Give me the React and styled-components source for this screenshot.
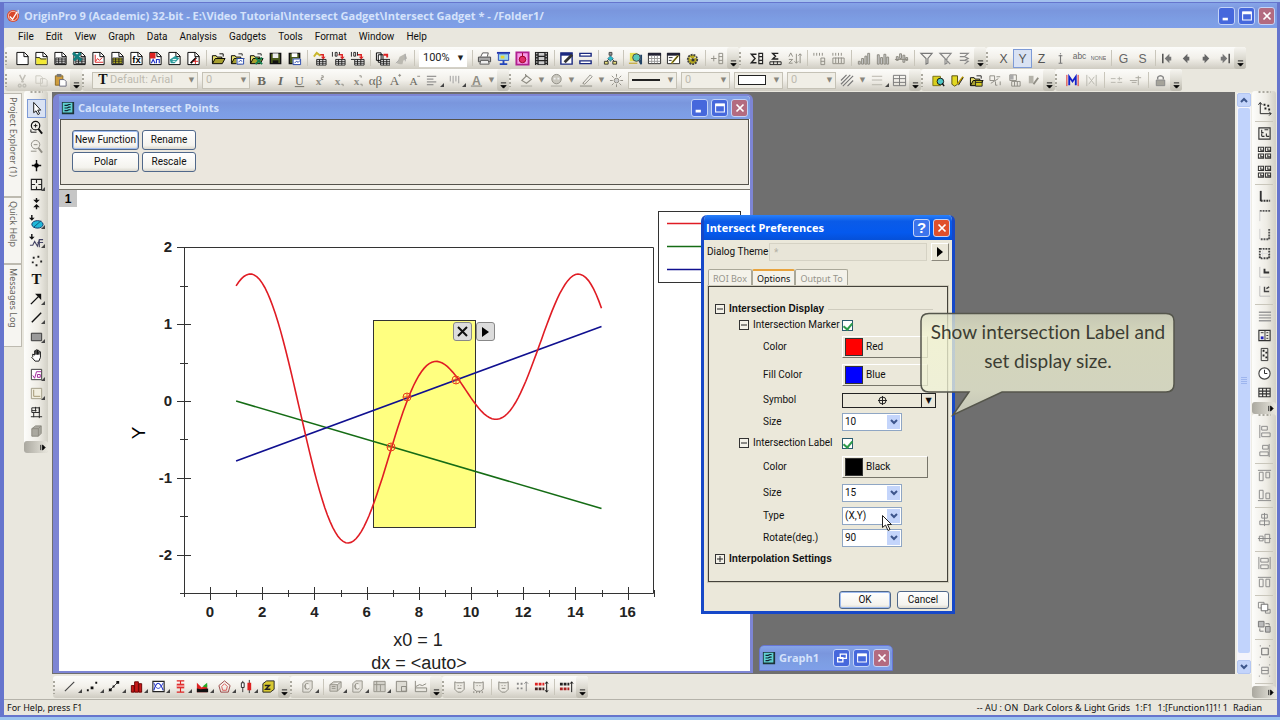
import React from 'react';
import styled, { createGlobalStyle, css } from 'styled-components';

const INK = '#222';
const OFF = '#8f8d84';

const GlobalStyle = createGlobalStyle`
  * { box-sizing: border-box; }
  body {
    margin: 0;
    background: #9cc0ea;
    color: #111;
    font-family: Roboto, 'Liberation Sans', sans-serif;
    font-size: 10px;
    line-height: 14px;
  }
  button, input, select { font: inherit; color: inherit; margin: 0; padding: 0; }
  button { white-space: nowrap; }
  a { color: inherit; text-decoration: none; }
`;

/* ---------- icons, drawn on a 16 x 16 grid ---------- */

const page = (children) => (
  <>
    <path d="M2 1.5h8l4 4v9H2z" fill="#fff" stroke="#000" />
    <path d="M9.5 1.5v4.5H14" fill="none" stroke="#000" />
    {children}
  </>
);
const line = (d, stroke = INK, width = 1, fill = 'none') => (
  <path d={d} stroke={stroke} strokeWidth={width} fill={fill} />
);
const fill = (d, color = INK) => <path d={d} fill={color} />;
const glyph = (text, color = '#666', size = 13, weight = 400, family = 'Liberation Sans') => (
  <text x="8" y="13" textAnchor="middle" fill={color} fontSize={size} fontWeight={weight} fontFamily={family}>
    {text}
  </text>
);
const folder = (extra) => (
  <>
    {line('M1.5 13V5h4l1 1.5h5V8', '#000', 1, '#e8e070')}
    {line('M1.5 13.500l3-5.500h10.500l-3 5.500z', '#000', 1, '#a8a030')}
    {extra}
  </>
);
const grid = (x, y, color = '#222', bg = '#fff') => (
  <>
    <path d={`M${x} ${y}h10v6h-10z`} fill={bg} stroke={color} />
    <path d={`M${x} ${y + 2}h10M${x} ${y + 4}h10M${x + 3} ${y}v6M${x + 6.5} ${y}v6`} stroke={color} fill="none" />
  </>
);
const importing = (extra) => (
  <>
    {grid(5, 9)}
    {line('M8 4h4v3', '#d22', 1.5)}
    {fill('M9.500 6h5L12 9z', '#d22')}
    {extra}
  </>
);

const icons = {
  page: page(),
  pageFolder: page(<>{fill('M2.500 7h4l1 1h6v6h-11z', '#f2e936')}{line('M2 7h4l1 1.500h6')}</>),
  pageGrid: page(grid(3, 7.5)),
  pageExcel: page(<>{grid(4, 7.5)}{line('M1 2l9 8M9 2l-7 8', '#127f7f', 3)}</>),
  pageGraph: page(<>{line('M4.500 4v8H13', '#d22')}{line('M5 11l2-3 2 2 3-3', '#d22')}</>),
  pageMatrix: page(grid(3, 7.5, '#222', '#e9e11f')),
  pageFx: page(<text x="8" y="13" textAnchor="middle" fontSize="10" fontWeight="700" fontFamily="Liberation Sans">fx</text>),
  pageLayout: page(<>{fill('M2 2h6v6H2z', '#d22')}{line('M3.500 13l2-4 2 4M9 13V9h3v4', '#2233c8', 1.2)}</>),
  pageNotes: page(<>{fill('M3 9l6-4 4 3-5 5H4z', '#2b9c9c')}{line('M6 9h4M6 11h3', '#fff')}</>),
  pageDigit: page(<>{line('M5 13l6-6', '#000', 2)}{line('M7 11h6M10 8v6', '#d22')}</>),
  open: folder(line('M9 3h4v3', '#000')),
  openTemplate: folder(<>{fill('M7 8h8v6H7z', '#fff')}{line('M7.500 8h7v6h-7zM9 12l2-2 2 1', '#2244aa')}{line('M9 3h4v2')}</>),
  openExcel: folder(<>{line('M7 7l7 7M14 7l-7 7', '#127f4f', 2)}{line('M9 3h4v2')}</>),
  save: <>{line('M2.500 2.500h11v11h-11z', '#111', 1.5, '#4a5a1c')}{fill('M5 2.500h6v5H5z', '#eee')}{fill('M5 10h6v3H5z', '#111')}</>,
  saveTemplate: <>{line('M2.500 2.500h11v11h-11z', '#111', 1.5, '#4a5a1c')}{fill('M5 2.500h6v4H5zM6 8h9v6H6z', '#fff')}{line('M6.500 8.500h8v6h-8zM8 13l2-2 2 1 2-2', '#2244aa')}</>,
  import1: importing(line('M2 6l3-4 4 3', '#c9b62a', 2)),
  import2: importing(line('M1.500 1v5M4.500 1.500h2v4h-2zM9 1v3')),
  import3: importing(<>{line('M1.500 1v5M4 1.500h2v4H4zM8 1v4')}{line('M1 9h4')}</>),
  batch: <>{line('M1.500 2h5v8h-5zM3.500 4h5v8h-5z', '#000', 1, '#fff')}{grid(6, 9)}{line('M9 4h4v3', '#d22', 2)}</>,
  recalc: <>{fill('M3 13l3-7 6-3 2 5-4 2-1 4H6z', '#bbb9b1')}{line('M2 13l3-3M12 3v8', '#aaa')}</>,
  print: <>{line('M4 6l2-4h6l-1 4', '#555', 1, '#fff')}{line('M1.500 6.500h13v5h-13z', '#444', 1, '#aaa')}{line('M4 10h8l1 4H3z', '#555', 1, '#eee')}</>,
  slide: <>{fill('M1 1h14v2H1z', '#2233aa')}{line('M2.500 3h11v7h-11z', '#2244bb', 1, '#9fd8e8')}{fill('M5 5h4v3H5z', '#e7d42c')}{line('M8 10v3M4 14h8', '#2244bb', 2)}</>,
  target: <>{line('M1.500 1.500h13v13h-13z', '#b02090', 2, '#f79be6')}<circle cx="8" cy="9" r="3.500" fill="#e02a6a" stroke="#902" />{line('M8 2v4', '#902')}</>,
  film: <>{fill('M1 1h14v14H1z')}{fill('M5 2h6v3H5zM5 6.500h6v3H5zM5 11h6v3H5z', '#ccc')}<path d="M3 2v13M13 2v13" stroke="#fff" strokeDasharray="1.500 1.500" /></>,
  editPage: <>{line('M2 2h12v12H2z', '#1b2a80', 1.5, '#fff')}{fill('M2 2h12v3H2z', '#1b2a80')}{line('M6 12l8-8', '#333', 3)}</>,
  rows: line('M2 2.500h12v3H2zM2 10.500h12v3H2z', '#1b2a80', 1.5, '#fff'),
  org: <>{line('M8 5v6M3 12l5-5 5 5', '#333')}{line('M6.500 1.500h3v3h-3z', '#444', 1, '#999')}{line('M8 5l3 3-3 3-3-3z', '#345', 0.5, '#2bbccc')}{line('M1.500 11h4v3h-4zM10.500 11h4v3h-4z', '#333', 1, '#e9e07a')}</>,
  find: <>{fill('M2 2h8v9H2z', '#e5e04d')}<circle cx="9" cy="7" r="4" fill="#58c8b8" stroke="#444" />{line('M12 10l2 4V4', '#246', 2)}{line('M1 13h9', '#b90')}</>,
  table: <>{line('M1.500 2.500h13v11h-13z', '#222', 1, '#fff')}{fill('M1 2h14v3H1z', '#223')}{line('M2 8h12M2 11h12M5 5v8M8 5v8M11 5v8', '#999')}</>,
  tableEdit: <>{line('M1.500 2.500h13v11h-13z', '#222', 1, '#fff')}{fill('M1 2h14v3H1z', '#223')}{line('M3 7h4M3 10h3', '#333')}{line('M6 13l7-8', '#b8a61e', 2)}{line('M7 12l6-7')}</>,
  gear: <><circle cx="8" cy="9" r="5" fill="#b8aa1e" stroke="#444" strokeDasharray="2 1" strokeWidth="2" />{line('M5 7l3 2 4-3', '#fff')}{fill('M7 8h3v3H7z', '#333')}</>,
  addCol: <>{line('M1 8h6M4 5v6', OFF)}{line('M9.500 2.500h4v11h-4zM9.500 6h4M9.500 10h4', OFF)}</>,
  sumCol: <>{line('M8 3.500H2.500l4 4.500-4 4.500H8', '#222', 1.5)}{line('M10.500 2.500h4v11h-4zM10.500 6h4M10.500 10h4', '#222', 1.2)}</>,
  sumRow: <>{line('M11 2.500H5l3 3-3 3h6', '#222', 1.5)}{line('M2 11.500h12v3H2zM6 11v3M10 11v3', '#222')}</>,
  sort: line('M2 6l2-4 2 4M2 9h4l-4 4h4M10 3v10M8 11l2 2 2-2M14 13V3M12 5l2-2 2 2', OFF),
  numCol: <>{line('M2 2v3M5 2v3M8 2v3M11 2v3', OFF)}{line('M9.500 7.500h4v7h-4zM9.500 11h4', OFF)}</>,
  numRow: <>{line('M2 2v3M5 2v3M8 2v3M11 2v3', OFF)}{line('M2 7.500h12v6H2zM5 7v6M8 7v6M11 7v6', OFF)}</>,
  bars1: line('M2.500 14v-3h2v3zM6 14V8h2v6zM9.500 14V5.500h2V14zM12.500 14V2.500h2V14z', '#8a877e', 1, '#ccc'),
  bars2: line('M2.500 14V4h2v10zM6 14V7h2v7zM9.500 14V3.500h2V14zM12.500 14V6.500h2V14z', '#8a877e', 1, '#ccc'),
  bars3: line('M2.500 10V6h2v4zM6 8V3h2v5zM9.500 12V4.500h2V12zM12.500 10V7h2v3zM1 9h14', '#8a877e', 1, '#ccc'),
  funnel: line('M2 2.500h12L9.500 8v5l-2 1V8z', '#777', 1.2),
  funnelOff: line('M2 2.500h12L9.500 8v5l-2 1V8zM2 2l11 12', '#888', 1.2),
  funnelRun: line('M3 2.500h9L8 6l4 2-4 2 4 1-4 3M3 6h5M3 10h5', '#888', 1.2),
  x: glyph('X', '#555'),
  y: glyph('Y', '#555'),
  z: glyph('Z', '#555'),
  err: line('M8 4v9M6 13h4M6 5h4M8 2v1', '#777', 1.2),
  abc: <text x="8" y="9" textAnchor="middle" fontSize="9" fill="#666" fontFamily="Liberation Sans">abc</text>,
  none: <text x="8" y="10" textAnchor="middle" fontSize="6" fill="#666" fontFamily="Liberation Sans">NONE</text>,
  g: glyph('G', '#666'),
  s: glyph('S', '#666'),
  first: <>{line('M3 3v10', '#444', 1.5)}{fill('M5 8l5-5v3h2v4h-2v3z', '#777')}</>,
  prev: fill('M4 8l5-5v3h2v4H9v3z', '#666'),
  next: fill('M12 8L7 3v3H5v4h2v3z', '#666'),
  last: <>{line('M13 3v10', '#444', 1.5)}{fill('M11 8L6 3v3H4v4h2v3z', '#777')}</>,
  cut: line('M5 2l4 8M11 2L7 10M5 12a1.500 1.500 0 1 0 .1 0M10 12a1.500 1.500 0 1 0 .1 0', '#c0beb6', 1.5),
  copy: line('M2 3h5l2 2v6H2zM7 6h5l2 2v6H7z', '#cbc9c0'),
  paste: <>{line('M2.500 3h8v10h-8z', '#8a6a22', 1, '#cf9d3e')}{fill('M4 1h5v3H4z', '#777')}{line('M7 7h5l2 2v5H7z', '#667', 1, '#fff')}</>,
  bold: glyph('B', '#6b6960', 14, 700, 'Liberation Serif'),
  italic: <text x="8" y="13" textAnchor="middle" fill="#6b6960" fontSize="14" fontStyle="italic" fontWeight="700" fontFamily="Liberation Serif">I</text>,
  underline: <>{glyph('U', '#6b6960', 13, 400, 'Liberation Serif')}{line('M3 14.500h10', '#6b6960')}</>,
  sup: <>{glyph('x', OFF, 12, 700, 'Liberation Serif')}{line('M11 3h2v2h-2v2h2', OFF)}</>,
  sub: <>{glyph('x', OFF, 12, 700, 'Liberation Serif')}{line('M12 12h2v2', OFF)}</>,
  supsub: <>{glyph('x', OFF, 12, 700, 'Liberation Serif')}{line('M11 3h2v2M12 12h2v2', OFF)}</>,
  greek: glyph('αβ', '#6b6960', 14, 400, 'Liberation Serif'),
  bigger: <>{glyph('A', '#6b6960', 14, 400, 'Liberation Serif')}{line('M12 2.500h3M13.500 1v3', OFF)}</>,
  smaller: <>{glyph('A', '#6b6960', 12, 400, 'Liberation Serif')}{line('M12 3.500h3', OFF)}</>,
  align: line('M2 3.500h10M2 6.500h7M2 9.500h10M2 12.500h7', '#777'),
  valign: line('M3.500 3v6M6.500 3v8M9.500 3v6M12.500 3v8', '#999'),
  fontColor: <>{glyph('A', OFF, 13, 700)}{fill('M2 13h12v2H2z', '#aaa8a0')}</>,
  bucket: <>{line('M3 8l5-5 5 4-5 4zM7 3V1', OFF, 1.2)}{fill('M2 13h12v2H2z', '#c2c0b8')}</>,
  palette: <><circle cx="8" cy="6.500" r="5" fill="#c9c7be" stroke={OFF} />{fill('M5 5h2v2H5zM9 5h2v2H9z', '#eee')}{fill('M2 13h12v2H2z', '#c2c0b8')}</>,
  pen: <>{line('M4 11l8-9 2 2-8 8z', OFF)}{fill('M1 13h13v2H1z', '#b2b0a8')}</>,
  sun: <><circle cx="8" cy="8" r="2.500" fill="#ccc" stroke={OFF} />{line('M8 1v3M8 12v3M1 8h3M12 8h3M3 3l2 2M11 11l2 2M13 3l-2 2M5 11l-2 2', OFF)}</>,
  hatch: line('M1 8l6-6M1 12L11 2M3 14L14 3M8 14l6-6', '#777', 1.2),
  gridLines: line('M2 3.500h11M2 7.500h11M2 12.500h11', '#b5b3aa', 1),
  cells: line('M1.500 2.500h13v11h-13zM1.500 6h13M1.500 10h13M8 2.500v11', '#777'),
  dataFind: <>{line('M2 3.500h8v10H2z', '#776f10', 1, '#d9cf1c')}<circle cx="10" cy="9" r="3.500" fill="#4ec6c6" stroke="#111" />{line('M12 11l2 3', '#111', 1.5)}</>,
  dataEdit: <>{line('M2 3h6v9l-3 2-3-2z', '#554e10', 1, '#e3d922')}{line('M8 12l6-8', '#b90', 2)}{line('M9 13l5-8')}</>,
  dataOpen: folder(<>{line('M7 8h7v6H7z', '#222', 1, '#d4c91d')}{line('M8 3h5v3M7 10h7')}</>),
  calc1: line('M2 3h5v5H2zM9 4h4M3 11l8-5M8 9v4h2M13 9v4', '#8e8c84'),
  calc2: <>{line('M3 2h7v6H3zM5 9h9v5H5zM8 9v5M11 9v5', '#8e8c84')}{fill('M3 2h4v5H3z', '#aaa')}</>,
  calc3: <>{fill('M3 3h5v8H3z', '#b5b3aa')}{line('M8 12l5-7', OFF, 2)}</>,
  mask: <><path d="M2 2v12M14 2v12" stroke="#d22" /><path d="M4.500 13V4L8 9l3.500-5v9" stroke="#1522c8" strokeWidth="2" fill="none" /></>,
  unmask: line('M3 2v12M13 2v12M5 4l6 8M11 4l-6 8', '#b8b6ae'),
  nudge1: line('M2 6h5M2 10h5M9 6h5M9 10h5M11 4v4', '#b8b6ae'),
  nudge2: line('M2 8h8M8 5h6M11 3v10M4 10h5', '#aaa89f'),
  lock: <>{line('M5 7V4.500q3-3 6 0V7', '#888', 1.5)}{line('M3.500 7.500h9v6h-9z', '#888', 1, '#a5a39a')}</>,
  pointer: line('M5 1.500v11l2.500-2 2 4 1.800-1-2-3.800H12.500z', '#111', 1, '#fff'),
  zoomIn: <><circle cx="7" cy="6" r="4.500" fill="none" stroke="#111" strokeWidth="1.300" />{line('M10 9.500l4 5', '#111', 2)}{line('M5 6h4M7 4v4M2 10v3h6', '#111')}</>,
  zoomOut: <><circle cx="7" cy="6" r="4.500" fill="none" stroke={OFF} />{line('M10 9.500l4 5', OFF, 2)}{line('M5 6h4M2 13h6', OFF)}</>,
  cross: <>{line('M8 2v12M3 8h10', '#111', 1.5)}<circle cx="8" cy="8" r="2.500" /></>,
  region: line('M2.500 2.500h11v11h-11zM8 3v3.500M8 10v3M3 8h3.500M10 8h3', '#222', 1.2),
  select: <>{line('M8 2v3M8 11v3', '#111', 1.5)}{fill('M4.500 4h7L8 7.500zM4.500 12h7L8 8.500z', '#111')}</>,
  maskTool: <>{line('M3 0v4', '#111', 1.5)}{fill('M0 3h6L3 6z', '#111')}<ellipse cx="9" cy="10" rx="6" ry="4" fill="#20b8d8" stroke="#136" />{line('M5 13l8-7', '#157')}</>,
  clipTool: <>{line('M3 0v4', '#111', 1.5)}{fill('M0 3h6L3 6z', '#111')}{line('M1 12h3l2-4 3 5 2-7h4M9 9h6M11 6v8', '#446', 1.2)}</>,
  dots: fill('M4 4h2v2H4zM9 3h2v2H9zM3 9h2v2H3zM7 12h2v2H7zM12 8h2v2h-2z', '#222'),
  text: glyph('T', '#111', 16, 700, 'Liberation Serif'),
  arrow: <>{line('M2 14l8-8', '#111', 1.5)}{fill('M6.500 3H13v6.500z', '#111')}</>,
  lineTool: line('M3 13L13 3', '#111', 1.5),
  rect: line('M2.500 4.500h11v8h-11z', '#333', 1, '#9a9a9a'),
  hand: line('M4 9V6.500l2 1V3h1.500v4V2H9v5V2.500h1.500V7 4h1.700v6l-1.700 4H6.500l-3.500-4z', '#111', 1, '#fff'),
  graphObj: <>{line('M2.500 2.500h11v11h-11z', '#333', 1, '#fff')}{line('M4 9l2 3 2-7h5M9 8h3v3H9z', '#a0209a')}</>,
  ruler: <>{line('M2.500 2.500h11v11h-11z', '#a09c86', 1, '#f1eedf')}{line('M5 4v7h7', '#a09470', 1)}</>,
  rotate: line('M3 3h8v5H3zM5 8v5M2 12.500h12M11 2v12M3 6h5M7 2v5', '#222'),
  cube: line('M3 5l4-3h6v8l-3 3H3zM3 5h7v8M10 5l3-3', '#8c8a80', 1, '#aaa89f'),
  rescale: <>{line('M3.500 2v11.500H15M1.500 4l2-2.500 2 2.500M13 11.500l2 2-2 2', '#222')}{fill('M7 3h2v2H7zM11 4h2v2h-2zM8 7h2v2H8zM12 8h2v2h-2z', '#222')}</>,
  panelWide: line('M2 2h12v12H2zM5 4v3h2M8 4h4M5 11h3M10 11h3M5 8v3M10 8v3', '#333', 1.2),
  panelQuad: line('M1.500 2.500h5.500v4.500h-5.500zM9 2.500h5.500v4.500h-5.500zM1.500 9.500h5.500v4.500h-5.500zM9 9.500h5.500v4.500h-5.500zM4 3.500v2h3M11.500 3.500v2h3M4 10.500v2h3M11.500 10.500v2h3', '#333', 1.1),
  axisL: <>{line('M4 2v11', '#333', 2)}<path d="M4 12.500h10" stroke="#333" strokeWidth="2" strokeDasharray="2 1" /></>,
  axisT: <><path d="M3 3h11" stroke="#555" strokeWidth="2" strokeDasharray="2 1" />{line('M3 3v11', '#ccc')}</>,
  axisR: <><path d="M13 2v11H3" stroke="#555" strokeWidth="2" strokeDasharray="2 1" fill="none" />{line('M3 2v11', '#ccc')}</>,
  axisBox: <><path d="M3 3h10v10H3z" stroke="#444" strokeWidth="2" strokeDasharray="2 1" fill="none" />{line('M6 3v10M3 8h10', '#ddd')}</>,
  axisIn: <>{line('M3 2v11h11', '#bbb')}{line('M8 4v4h5', '#333', 2)}</>,
  axisIn2: <>{line('M3 2v11h11', '#bbb')}{line('M8 3v5h5M10 5l3-2', '#444', 1.5)}</>,
  lines: line('M2 3.500h13M2 6.500h13M2 9.500h13M2 12.500h13', '#999', 1.5),
  legend: <>{line('M2 2.500h12v11H2z', '#333', 1.2)}{line('M4 5h3M10 5h2M10 8h2M10 11h2M8.500 3v10', '#333')}{fill('M4 9h3v3H4z', '#22b')}</>,
  scale: <>{line('M4.500 1.500h7v13h-7z', '#333')}{fill('M6 3h2v2H6zM9 5h2v2H9zM6 8h2v2H6zM9 10h2v2H9z')}</>,
  clock: <><circle cx="8" cy="8" r="6" fill="#fff" stroke="#444" strokeWidth="1.200" />{line('M8 4v4h3', '#222')}</>,
  matrix: line('M2 3.500h12v9H2zM2 6.500h12M2 9.500h12M6 3v9M10 3v9', '#333', 1.2),
  alignL: line('M3 1v14M5 2.500h6v4H5zM5 9.500h9v4H5z', '#888'),
  alignR: line('M13 1v14M6 2.500h6v4H6zM3 9.500h9v4H3z', '#888'),
  alignT: line('M1 2.500h14M2.500 4.500h4v9h-4zM9.500 4.500h4v6h-4z', '#888'),
  alignB: line('M1 14.500h14M2.500 3.500h4v9h-4zM9.500 6.500h4v6h-4z', '#888'),
  centerV: line('M8 1v14M5 2.500h6v4H5zM3 9.500h10v4H3z', '#888'),
  centerH: line('M1 8h14M2.500 5.500h4v5h-4zM8.500 3.500h5v9h-5z', '#888'),
  sameW: line('M2 1v13M14 1v13M4 2.500h8v4H4zM4 9.500h8v4H4z', '#888'),
  sameH: line('M1 2.500h14M2.500 4.500h4v8h-4zM9.500 4.500h4v8h-4z', '#888'),
  front: <>{line('M1.500 2.500h6v6h-6zM9 10h5v4H9z', '#888')}{line('M4.500 4.500h7v7h-7z', '#666', 1, '#fff')}</>,
  back: <>{line('M1.500 2.500h6v6h-6zM9 8h5v6H9z', '#777', 1, '#bbb')}{line('M9 5h4v2M3 10v3h4', '#777')}</>,
  group: line('M5 4.500h7v7H5zM3 2h1M13 2h1M3 14h1M13 14h1', '#666'),
  ungroup: line('M5 4.500h7v7H5zM5 8h7M2 2h1M13 2h1M2 14h1M13 14h1', '#888'),
  plotLine: line('M2 13L12 3', '#444', 1.2),
  plotScatter: fill('M2 11h2v2H2zM6 8h3v3H6zM11 3h2v2h-2z', '#111'),
  plotLineSym: <>{line('M2 13L12 3', '#333')}{fill('M2 10h3v3H2zM6 7h2v2H6zM10 2h3v3h-3z', '#111')}</>,
  plotBar: line('M2.500 14V7h3v7zM6 14V3h4v11zM10.500 14V5h3v9z', '#600', 1, '#c81818'),
  plotMulti: <>{line('M2 2.500h12v11H2z', '#222', 1.2, '#fff')}{line('M3 12c3-10 6-10 10 0', '#2233c8', 1.2)}{line('M3 4c3 9 7 7 10 0', '#2233c8')}</>,
  plotBox: <>{line('M4 2h8M8 2v12M4 14h8', '#d22', 1.2)}{fill('M4 5h8v5H4z', '#e03030')}{line('M4 7.500h8', '#fff')}</>,
  plotArea: <>{fill('M2 4l5 5 6-3v8H2z', '#d22')}{fill('M8 8l5-4v5z', '#2a2')}{fill('M2 10l4 1 8-1v4H2z', '#111')}</>,
  plotRadar: <>{line('M8 2l6 5-2 7H4L2 7z', '#944')}{line('M8 5l3 3-1 4H6L5 8z', '#d55')}</>,
  plotStock: <>{line('M4 2v12M11 1v14', '#333')}{line('M2.500 4h3v5h-3z', '#222', 1, '#fff')}{fill('M9 4h4v8H9z', '#d22')}</>,
  plotTemplate: <>{line('M2 5l4-3h8v9l-4 3H2z', '#222', 1, '#d8c932')}{line('M4 7h5l-4 4h5', '#222', 1.5)}</>,
  plot3d: line('M3 5l3-3h7v8l-3 4H3zM6 5v6M9 5a3 3 0 1 0 1 5', '#96948b', 1, '#e3e1da'),
  surface: line('M2 6l4-3h8v6l-4 4H2zM2 6h8l4-3M10 6v7M4 8h4M4 10h4', '#96948b', 1, '#d3d1c9'),
  contour: line('M2 2.500h12v11H2zM2 6h12M5 2v11M9 6v7', '#96948b', 1, '#d3d1c9'),
  image: line('M2.500 2.500h11v11h-11zM8 8h5v5H8z', '#8a887f', 1, '#dedcd4'),
  profile: line('M2.500 2v11.500h12v-4h-12M3 8l4-2 3 1 4-2', '#8a887f', 1),
  mask1: line('M3 3l2 1h6l2-1v8l-3 3H6l-3-3zM6 7h1M9 7h1M6 10h4', '#8a887f', 1, '#eceae3'),
  mask2: line('M3 3l2 1h6l2-1v8l-3 2H6l-3-2zM6 7h1M9 7h1M3 13v2M6 13v2M9 13v2M12 13v2', '#8a887f', 1, '#eceae3'),
  swap: <>{fill('M2 4h2v2H2zM6 4h2v2H6zM2 9h2v2H2zM6 9h2v2H6z', '#888')}{line('M12 3v10M10 5l2-2 2 2', '#888')}</>,
  swapRed: <>{fill('M1 4h3v3H1zM5 4h3v3H5zM9 4h2v3H9z', '#d22')}{fill('M1 9h3v3H1zM5 9h3v3H5zM9 9h2v3H9z', '#422')}{line('M13.500 3v11M12 5l1.500-2L15 5M12 12l1.500 2 1.500-2', '#111')}</>,
  swapDark: <>{fill('M1 4h3v3H1zM5 4h3v3H5zM9 4h2v3H9z', '#222')}{fill('M1 9h3v3H1zM5 9h3v3H5zM9 9h2v3H9z', '#a22')}{line('M13.500 3v11M12 5l1.500-2L15 5', '#111')}</>,
  graphWin: <>{fill('M1 1h14v14H1z', '#1c3438')}{fill('M2 2h11v11H2z', '#5fd0d0')}{line('M4 5h3l2-1h2M4 8h3l2-1h2M4 11h3l2-1h2', '#123', 1.3)}</>,
  origin: <><circle cx="7.500" cy="8.500" r="6.500" fill="#d9472b" /><circle cx="7.500" cy="8.500" r="5" fill="none" stroke="#f6c6b8" />{line('M4 9l3 3 5-8', '#fff', 1.5)}{line('M13 2v4', '#fff')}</>,
  minimize: fill('M3 10h6v3H3z', '#fff'),
  maximize: <>{line('M3 3.500h10v9H3z', '#fff', 1.2)}{fill('M3 3h10v3H3z', '#fff')}</>,
  restore: line('M6 3.500h7v5H6zM3 7.500h6v5H3z', '#fff', 1.5),
  close: line('M4 4l8 8M12 4l-8 8', '#fff', 2),
};

const Svg = styled.svg`
  display: block;
  flex: none;
  width: ${({ $size }) => $size}px;
  height: ${({ $size }) => $size}px;
`;

const Icon = ({ name, size = 14 }) => (
  <Svg $size={size} viewBox="0 0 16 16" aria-hidden="true">{icons[name]}</Svg>
);

/* ---------- frame ---------- */

const Frame = styled.div`
  display: flex;
  flex-direction: column;
  min-height: 100vh;
  border-top: 2px solid #a3c1ee;
  border-bottom: 3px solid #9cc4ee;
`;

const AppWindow = styled.div`
  display: flex;
  flex: 1;
  flex-direction: column;
  border: solid #6675cd;
  border-width: 1px 3px 2px 4px;
  background: #e9e7de;
`;

const TitleBar = styled.header`
  display: flex;
  align-items: center;
  height: ${({ $h }) => $h}px;
  padding: 0 2px;
  gap: 3px;
  background: ${({ $active }) => ($active
    ? 'linear-gradient(#2a80f8, #0a5be8 25%, #0459ee 70%, #0550d8)'
    : 'linear-gradient(#86a4e8, #7a96dd 30%, #7d9ee4 70%, #7f9fe8)')};
  color: ${({ $active }) => ($active ? '#fff' : '#d5e2fb')};
`;

const TitleText = styled.h1`
  flex: 1;
  margin: 0;
  overflow: hidden;
  font: 700 11px/16px 'Open Sans', sans-serif;
  white-space: nowrap;
`;

const CaptionButtons = styled.div`
  display: flex;
  gap: 3px;
`;

const captionColors = {
  blue: '#4668dc',
  rose: '#b36b80',
  red: '#e0502c',
  help: '#3c74ec',
};

const CaptionButton = styled.button`
  display: grid;
  place-items: center;
  width: 17px;
  height: 18px;
  border: 1px solid #c4d4f8;
  border-radius: 3px;
  background: ${({ $tone = 'blue' }) => captionColors[$tone]};
  color: #fff;
  font: 700 15px/15px 'Liberation Sans', sans-serif;
`;

const MenuBar = styled.nav`
  display: flex;
  gap: 12px;
  height: 19px;
  padding: 2px 14px;
`;

/* ---------- toolbars ---------- */

const ToolRow = styled.div`
  display: flex;
  align-items: center;
  height: ${({ $h = 22 }) => $h}px;
  padding-left: 1px;
  overflow: hidden;
`;

const column = css`
  flex-direction: column;
  width: 24px;
  border-radius: 3px;
  background: linear-gradient(90deg, #fdfdfb, #eeece5 60%, #d2d0c6);
`;

const Toolbar = styled.div`
  display: flex;
  flex: none;
  align-items: center;
  border-radius: 3px;
  background: linear-gradient(#fcfcfa, #f2f0ea 50%, #cfccc2);
  ${({ $vertical }) => $vertical && column}
`;

const Grip = styled.span`
  flex: none;
  align-self: center;
  width: ${({ $vertical }) => ($vertical ? 13 : 8)}px;
  height: ${({ $vertical }) => ($vertical ? 8 : 14)}px;
  background: radial-gradient(circle at 1px 1px, #aaa89e 1px, transparent 1px)
    center / ${({ $vertical }) => ($vertical ? '4px 8px' : '8px 4px')};
`;

const Separator = styled.span`
  flex: none;
  width: ${({ $vertical }) => ($vertical ? 18 : 6)}px;
  height: ${({ $vertical }) => ($vertical ? 6 : 16)}px;
  background: linear-gradient(#c9c6bb, #c9c6bb) center / ${({ $vertical }) => ($vertical ? '100% 1px' : '1px 100%')} no-repeat;
`;

const ToolButton = styled.button`
  position: relative;
  display: flex;
  flex: none;
  align-items: center;
  justify-content: center;
  width: ${({ $more, $vertical }) => ($more && !$vertical ? 22 : 19)}px;
  height: 19px;
  padding-right: ${({ $more, $vertical }) => ($more && !$vertical ? 3 : 0)}px;
  border: 1px solid ${({ $on }) => ($on ? '#7d9ad6' : 'transparent')};
  background: ${({ $on }) => ($on ? '#d9e2f3' : 'none')};

  ${({ $more }) => $more && css`
    &::after {
      content: '';
      position: absolute;
      right: 0;
      bottom: 2px;
      border: 2px solid transparent;
      border-right-color: #444;
      border-bottom-color: #444;
    }
  `}
`;

const Overflow = styled.button`
  display: flex;
  flex: none;
  align-items: flex-end;
  justify-content: ${({ $vertical }) => ($vertical ? 'flex-end' : 'center')};
  width: ${({ $vertical }) => ($vertical ? 24 : 12)}px;
  height: ${({ $vertical }) => ($vertical ? 12 : 22)}px;
  padding: 2px;
  border: 0;
  border-radius: 3px;
  background: ${({ $vertical }) => ($vertical ? 'linear-gradient(90deg, #aaa89f, #e9e7de)' : 'linear-gradient(#f6f5f0, #dddbd2 50%, #bdbaaf)')};
`;

const Drop = styled.button`
  flex: none;
  width: 11px;
  height: 18px;
  border: 0;
  background: none;
  color: ${({ $strong }) => ($strong ? '#222' : '#88867d')};
  font: 7px/14px 'DejaVu Sans', sans-serif;
`;

const ComboBox = styled.div`
  display: flex;
  flex: none;
  align-items: center;
  width: ${({ $w }) => $w}px;
  height: 17px;
  margin: 0 2px;
  padding-left: 3px;
  border: 1px solid ${({ $plain }) => ($plain ? '#fff' : '#c5c2b6')};
  background: ${({ $plain }) => ($plain ? '#fff' : '#f0eee6')};
  color: ${({ $plain }) => ($plain ? '#222' : '#bdbab0')};
`;

const ComboInput = styled.input`
  flex: 1;
  min-width: 0;
  border: 0;
  background: none;
  font-size: 11px;
`;

const Combo = ({ w, value, label, plain, children }) => (
  <ComboBox $w={w} $plain={plain}>
    {children || null}
    <ComboInput aria-label={label} defaultValue={value} />
    <Drop $strong={plain} aria-label={`${label} list`}>▼</Drop>
  </ComboBox>
);

const LineSample = styled.span`
  width: 28px;
  height: ${({ $box }) => ($box ? 10 : 1)}px;
  flex: none;
  border: 1px solid #222;
  background: #fff;
`;

// "|" is a separator, a trailing "+" marks a tool with a fly-out,
// a trailing ">" one with a drop-down beside it, "*" the pressed one.
const Tools = ({ list, vertical }) => list.split(' ').map((item, i) => {
  if (item === '|') return <Separator key={i} $vertical={vertical} />;
  const name = item.replace(/[+>*]$/, '');
  return (
    <React.Fragment key={i}>
      <ToolButton
        aria-label={name}
        $vertical={vertical}
        $more={item.endsWith('+')}
        $on={item.endsWith('*')}
      >
        <Icon name={name} size={15} />
      </ToolButton>
      {item.endsWith('>') && <Drop aria-label={`${name} options`}>▼</Drop>}
    </React.Fragment>
  );
});

const Bar = ({ list, vertical, children }) => (
  <Toolbar $vertical={vertical} role="toolbar">
    <Grip $vertical={vertical} />
    {children || <Tools list={list} vertical={vertical} />}
    <Overflow $vertical={vertical} aria-label="Toolbar options">
      <svg width="7" height="7" viewBox="0 0 8 8" aria-hidden="true">
        {vertical ? <path d="M2 1v6M4 1l3 3-3 3z" stroke="#111" /> : <path d="M1 1h6M1 4h6L4 7z" stroke="#111" />}
      </svg>
    </Overflow>
  </Toolbar>
);

/* ---------- docks and workspace ---------- */

const Body = styled.div`
  display: flex;
  flex: 1;
`;

const Center = styled.div`
  display: flex;
  flex: 1;
  flex-direction: column;
  min-width: 0;
`;

const LeftDock = styled.div`
  display: flex;
  align-items: flex-start;
  gap: 2px;
  width: 48px;
`;

const RightDock = styled.div`
  display: flex;
  flex-direction: column;
  width: 25px;
`;

const SideTabs = styled.div`
  display: flex;
  flex-direction: column;
  width: 18px;
  padding-top: 2px;
`;

const SideTab = styled.button`
  height: ${({ $h }) => $h}px;
  padding: 3px 0;
  border: 1px solid #bdbab0;
  border-left: 0;
  background: #f6f5f1;
  color: #66645c;
  font: 9px/16px 'Noto Sans', sans-serif;
  text-align: left;
  writing-mode: vertical-rl;
`;

const WorkArea = styled.div`
  display: flex;
  flex: 1;
  padding-top: 1px;
`;

const Workspace = styled.main`
  position: relative;
  flex: 1;
  overflow: hidden;
  background: #6f6f6f;
`;

const ScrollTrack = styled.div`
  display: flex;
  flex-direction: column;
  width: 17px;
  border: solid #eeede5;
  border-width: 1px 1px 0 2px;
  background: #f4f4fb;
`;

const ScrollButton = styled.button`
  display: grid;
  place-items: center;
  height: 14px;
  border: 1px solid #b3c6f2;
  border-radius: 2px;
  background: #c3d4fb;
`;

const ScrollThumb = styled.div`
  display: grid;
  flex: 1;
  place-items: center;
  margin: 1px 1px 7px;
  border-radius: 2px;
  background: #c1d3fc;
`;

const StatusBar = styled.footer`
  display: flex;
  justify-content: space-between;
  height: 16px;
  padding: 1px 15px 0 3px;
  border-top: 1px solid #b5b3aa;
  font-size: 9px;
  font-family: 'Noto Sans', sans-serif;
`;

const StatusFields = styled.div`
  display: flex;
  gap: 5px;
`;

/* ---------- graph window ---------- */

const GraphWindow = styled.section`
  position: absolute;
  top: 2px;
  bottom: 1px;
  left: 1px;
  width: 700px;
  overflow: hidden;
  border: solid #7d85d4;
  border-width: 2px 3px 2px 6px;
  border-radius: 6px 6px 0 0;
  background: #fff;
`;

const GraphPanel = styled.div`
  display: grid;
  grid-template-columns: 67px 54px;
  grid-auto-rows: 20px;
  gap: 2px 3px;
  height: 66px;
  margin: 0 1px;
  padding: 10px 11px;
  border: 1px solid #55534c;
  background: #ebe7de;
`;

const PushButton = styled.button`
  min-width: ${({ $w = 0 }) => $w}px;
  height: ${({ $h = 20 }) => $h}px;
  border: 1px solid #50688a;
  border-radius: 3px;
  background: linear-gradient(#fff, #f4f3ee 80%, #dcd9cf);
  box-shadow: ${({ $default }) => ($default ? 'inset 0 0 0 1px #9fbcf0' : 'none')};
`;

const Divider = styled.div`
  height: 5px;
  border-bottom: 1px solid #77756c;
  background: #f3f1ea;
`;

const Plot = styled.div`
  position: relative;
`;

const Chart = styled.svg`
  display: block;
  font-family: 'Liberation Sans', Arial, sans-serif;
`;

const RoiButtons = styled.div`
  position: absolute;
  top: 132px;
  left: 394px;
  display: flex;
  gap: 4px;
`;

const RoiButton = styled.button`
  display: grid;
  place-items: center;
  width: 19px;
  height: 19px;
  border: 1px solid #888;
  border-radius: 3px;
  background: #dcdcdc;
`;

const MiniWindow = styled.section`
  position: absolute;
  bottom: 3px;
  left: 707px;
  width: 134px;
  border: 1px solid #6675d5;
  border-radius: 5px 5px 0 0;
  overflow: hidden;
`;

const px = (x) => 210 + x * 26.1;
const py = (y) => 401 - y * 76.8;
const wave = (x) => Math.sin(x - 0.33) + Math.cos(x / 2);
const wavePath = Array.from({ length: 141 }, (_, i) => 1 + i / 10)
  .map((x, i) => `${i ? 'L' : 'M'}${px(x).toFixed(1)} ${py(wave(x)).toFixed(1)}`)
  .join('');
const markers = [[391, 447], [407, 397], [456, 380]];

const GraphChart = () => (
  <Chart width="691" height="483" viewBox="59 190 691 483" role="img" aria-label="Intersecting curves">
    <rect x="59" y="190" width="18" height="17" fill="#c6c6c6" />
    <text x="68" y="203" textAnchor="middle" fontSize="12" fontWeight="700">1</text>
    <rect x="373.5" y="320.5" width="102" height="207" fill="#ffff80" stroke="#333" />
    <g stroke="#333" fill="none">
      <path d="M184.500 593.500V247.500H653.500V593.500z" />
      {[2, 1, 0, -1, -2].map((v) => <path key={v} d={`M177 ${Math.round(py(v)) + 0.5}h14`} />)}
      {[1.5, 0.5, -0.5, -1.5, -2.5].map((v) => <path key={v} d={`M180 ${Math.round(py(v)) + 0.5}h8`} />)}
      {[0, 2, 4, 6, 8, 10, 12, 14, 16].map((v) => <path key={v} d={`M${Math.round(px(v)) + 0.5} 587v13`} />)}
      {[-1, 1, 3, 5, 7, 9, 11, 13, 15, 17].map((v) => <path key={v} d={`M${Math.round(px(v)) + 0.5} 590v7`} />)}
    </g>
    <g fontSize="15" fontWeight="700" fill="#222">
      {[2, 1, 0, -1, -2].map((v) => <text key={v} x="172" y={py(v) + 5} textAnchor="end">{v}</text>)}
      {[0, 2, 4, 6, 8, 10, 12, 14, 16].map((v) => <text key={v} x={px(v)} y="617" textAnchor="middle">{v}</text>)}
    </g>
    <text transform="translate(145 433) rotate(-90)" textAnchor="middle" fontSize="19">Y</text>
    <g fontSize="18" textAnchor="middle" fill="#222">
      <text x="418" y="646">x0 = 1</text>
      <text x="419" y="669">dx = &lt;auto&gt;</text>
    </g>
    <g fill="none" strokeWidth="1.6">
      <path d={`M${px(1)} ${py(0)}L${px(15)} ${py(-1.4)}`} stroke="#156c15" />
      <path d={`M${px(1)} ${py(-0.78)}L${px(15)} ${py(0.97)}`} stroke="#101090" />
      <path d={wavePath} stroke="#e01c24" />
    </g>
    <g fill="none" stroke="#e8401c">
      {markers.map(([x, y]) => (
        <g key={x}>
          <circle cx={x} cy={y} r="4" />
          <path d={`M${x - 4} ${y}h8M${x} ${y - 4}v8`} />
        </g>
      ))}
    </g>
    <rect x="658.5" y="211.500" width="82" height="71" fill="#fff" stroke="#333" />
    <path d="M667 223.500h60" stroke="#e01c24" strokeWidth="1.500" />
    <path d="M667 246.500h60" stroke="#156c15" strokeWidth="1.500" />
    <path d="M667 269.500h60" stroke="#101090" strokeWidth="1.500" />
  </Chart>
);

/* ---------- preferences dialog ---------- */

const Dialog = styled.section`
  position: absolute;
  top: 123px;
  left: 649px;
  width: 254px;
  overflow: hidden;
  border: solid #1648c8;
  border-width: 0 3px 3px;
  border-radius: 6px 6px 0 0;
  background: #ebe8da;
`;

const ThemeRow = styled.div`
  display: flex;
  align-items: center;
  gap: 4px;
  padding: 3px 3px 8px;
  white-space: nowrap;
`;

const ThemeLabel = styled.label`
  width: 58px;
`;

const ThemeField = styled.input`
  flex: 1;
  min-width: 0;
  height: 18px;
  padding-left: 4px;
  border: 1px solid #d5d2c4;
  background: #e8e5d8;
  color: #b5b2a5;
`;

const Raised = styled.button`
  display: grid;
  place-items: center;
  width: 18px;
  height: 18px;
  border: 1px solid;
  border-color: #fff #8b887c #8b887c #fff;
  background: #ebe8da;
`;

const Tabs = styled.div`
  display: flex;
  padding: 0 4px;
`;

const Tab = styled.button`
  height: 17px;
  padding: 0 4px;
  border: 1px solid #aaa899;
  border-top: ${({ $on }) => ($on ? '2px solid #e8a33d' : '1px solid #aaa899')};
  border-bottom: 0;
  border-radius: 2px 2px 0 0;
  background: #f4f2ea;
  color: ${({ $on }) => ($on ? '#111' : '#96948a')};
  font: 9px/13px 'Noto Sans', sans-serif;
`;

const Panel = styled.div`
  margin: 0 4px 9px;
  padding: 14px 6px 12px;
  border: 1px solid #44423a;
  outline: 1px solid #cfccbc;
`;

const Row = styled.div`
  display: flex;
  align-items: center;
  height: ${({ $h }) => $h}px;
  padding-left: ${({ $level = 0 }) => $level * 24}px;
`;

const Label = styled.label`
  width: 79px;
`;

const TreeLabel = styled.label`
  width: ${({ $level }) => ($level ? '93px' : 'auto')};
  padding-left: 4px;
  font: ${({ $level }) => ($level ? 'inherit' : "700 10px/14px 'Liberation Sans', sans-serif")};
  white-space: nowrap;
`;

const Expander = styled.button`
  display: grid;
  flex: none;
  place-items: center;
  width: 10px;
  height: 10px;
  border: 1px solid #333;
  background: #f3f1e8;
`;

const Rule = styled.span`
  flex: 1;
  height: 1px;
  margin: 0 8px 0 4px;
  background: #cfccbe;
`;

const CheckBox = styled.input`
  display: grid;
  place-items: center;
  width: 11px;
  height: 11px;
  border: 1px solid #2c5c70;
  background: #fff;
  appearance: none;

  &:checked::before {
    content: '';
    width: 4px;
    height: 7px;
    border: solid #2d9a4a;
    border-width: 0 2px 2px 0;
    transform: rotate(40deg);
  }
`;

const ColorButton = styled.button`
  display: flex;
  align-items: center;
  gap: 3px;
  width: 86px;
  height: 22px;
  padding-left: 2px;
  border: 1px solid;
  border-color: #fff #77756a #77756a #fff;
  background: #ebe8da;
`;

const Swatch = styled.span`
  width: 18px;
  height: 18px;
  border: 1px solid #333;
  background: ${({ $color }) => $color};
`;

const SymbolButton = styled.button`
  display: flex;
  width: 94px;
  height: 15px;
  border: 1px solid #222;
  background: #ebe8da;
`;

const SymbolPreview = styled.span`
  display: grid;
  flex: 1;
  place-items: center;
  height: 13px;
`;

const SymbolArrow = styled.span`
  width: 14px;
  border-left: 1px solid #222;
  font: 8px/13px 'DejaVu Sans', sans-serif;
`;

const SelectBox = styled.div`
  display: flex;
  align-items: center;
  width: 60px;
  height: 18px;
  padding: 1px;
  border: 1px solid #8fa6c4;
  background: #fff;
`;

const Select = styled.select`
  flex: 1;
  min-width: 0;
  padding-left: 1px;
  border: 0;
  background: none;
  appearance: none;
`;

const SelectArrow = styled.span`
  display: grid;
  place-items: center;
  width: 13px;
  height: 14px;
  background: #c4d5fb;
`;

const DialogFooter = styled.div`
  display: flex;
  justify-content: flex-end;
  gap: 6px;
  padding: 0 3px 2px;
`;

const Chevron = ({ up }) => (
  <svg width="8" height="6" viewBox="0 0 8 6" aria-hidden="true">
    <path d={up ? 'M1 5l3-3 3 3' : 'M1 1l3 3 3-3'} fill="none" stroke="#3d568c" strokeWidth="2" />
  </svg>
);

const TreeRow = ({ h, level = 0, open = true, label, check }) => (
  <Row $h={h} $level={level}>
    <Expander aria-label={`${open ? 'Collapse' : 'Expand'} ${label}`}>
      <svg width="8" height="8" viewBox="0 0 8 8" aria-hidden="true">
        <path d={open ? 'M1 4h6' : 'M1 4h6M4 1v6'} stroke="#222" />
      </svg>
    </Expander>
    <TreeLabel $level={level} htmlFor={check ? label : undefined}>{label}</TreeLabel>
    {check && <CheckBox id={label} type="checkbox" defaultChecked />}
    {!level && open && <Rule />}
  </Row>
);

const ColorRow = ({ id, label, color, name }) => (
  <Row $h={28} $level={2}>
    <Label htmlFor={id}>{label}</Label>
    <ColorButton id={id}><Swatch $color={color} />{name}</ColorButton>
  </Row>
);

const SelectRow = ({ id, h, label, value }) => (
  <Row $h={h} $level={2}>
    <Label htmlFor={id}>{label}</Label>
    <SelectBox>
      <Select id={id} defaultValue={value}><option>{value}</option></Select>
      <SelectArrow><Chevron /></SelectArrow>
    </SelectBox>
  </Row>
);

const Preferences = () => (
  <Dialog role="dialog" aria-label="Intersect Preferences">
    <TitleBar $h={25} $active>
      <TitleText as="h2">Intersect Preferences</TitleText>
      <CaptionButtons>
        <CaptionButton $tone="help" aria-label="Help">?</CaptionButton>
        <CaptionButton $tone="red" aria-label="Close"><Icon name="close" /></CaptionButton>
      </CaptionButtons>
    </TitleBar>
    <ThemeRow>
      <ThemeLabel htmlFor="theme">Dialog Theme</ThemeLabel>
      <ThemeField id="theme" defaultValue="*" disabled />
      <Raised aria-label="Theme menu">
        <svg width="6" height="10" viewBox="0 0 6 10" aria-hidden="true"><path d="M0 0l6 5-6 5z" /></svg>
      </Raised>
    </ThemeRow>
    <Tabs role="tablist">
      <Tab role="tab">ROI Box</Tab>
      <Tab role="tab" $on>Options</Tab>
      <Tab role="tab">Output To</Tab>
    </Tabs>
    <Panel>
      <TreeRow h={16} label="Intersection Display" />
      <TreeRow h={16} level={1} label="Intersection Marker" check />
      <ColorRow id="marker-color" label="Color" color="#f00" name="Red" />
      <ColorRow id="marker-fill" label="Fill Color" color="#00f" name="Blue" />
      <Row $h={22} $level={2}>
        <Label htmlFor="symbol">Symbol</Label>
        <SymbolButton id="symbol">
          <SymbolPreview>
            <svg width="9" height="9" viewBox="0 0 9 9" aria-hidden="true">
              <circle cx="4.5" cy="4.5" r="3.500" fill="none" stroke="#222" />
              <path d="M0 4.500h9M4.500 0v9" stroke="#222" />
            </svg>
          </SymbolPreview>
          <SymbolArrow>▼</SymbolArrow>
        </SymbolButton>
      </Row>
      <SelectRow id="marker-size" h={22} label="Size" value="10" />
      <TreeRow h={20} level={1} label="Intersection Label" check />
      <ColorRow id="label-color" label="Color" color="#000" name="Black" />
      <SelectRow id="label-size" h={24} label="Size" value="15" />
      <SelectRow id="label-type" h={22} label="Type" value="(X,Y)" />
      <SelectRow id="label-rotate" h={22} label="Rotate(deg.)" value="90" />
      <TreeRow h={20} open={false} label="Interpolation Settings" />
    </Panel>
    <DialogFooter>
      <PushButton $w={52} $h={18} $default>OK</PushButton>
      <PushButton $w={52} $h={18}>Cancel</PushButton>
    </DialogFooter>
  </Dialog>
);

/* ---------- callout and mouse pointer ---------- */

const Callout = styled.aside`
  position: absolute;
  top: 220px;
  left: 868px;
  width: 256px;
  padding: 5px 0;
  color: #3c3d33;
  font: 19px/29px Lato, sans-serif;
  font-variant-ligatures: none;
  text-align: center;
  white-space: nowrap;
`;

const CalloutShape = styled.svg`
  position: absolute;
  top: 0;
  left: 0;
`;

const CalloutText = styled.p`
  position: relative;
  margin: 0;
`;

const Cursor = styled.svg`
  position: absolute;
  top: 422px;
  left: 829px;
`;

const Tip = () => (
  <Callout>
    <CalloutShape width="260" height="108" viewBox="0 0 260 108" aria-hidden="true">
      <defs>
        <linearGradient id="tip" x1="0" x2="0" y1="0" y2="1">
          <stop offset="0" stopColor="#dfe1c8" />
          <stop offset=".2" stopColor="#f2f4d2" />
          <stop offset=".75" stopColor="#f0f2d6" />
          <stop offset="1" stopColor="#dddfcb" />
        </linearGradient>
      </defs>
      <path
        d="M9 1.500H246Q254 1.500 254 9V72Q254 80 246 80H82L33 103L49 80H9Q1 80 1 72V9Q1 1.500 9 1.500z"
        fill="url(#tip)"
        fillOpacity=".77"
        stroke="#55564c"
        strokeWidth="1.5"
      />
    </CalloutShape>
    <CalloutText>Show intersection Label and<br />set display size.</CalloutText>
  </Callout>
);

const MENUS = ['File', 'Edit', 'View', 'Graph', 'Data', 'Analysis', 'Gadgets', 'Tools', 'Format', 'Window', 'Help'];

export default function App() {
  return (
    <Frame>
      <GlobalStyle />
      <AppWindow>
        <TitleBar $h={25}>
          <Icon name="origin" size={15} />
          <TitleText>OriginPro 9 (Academic) 32-bit - E:\Video Tutorial\Intersect Gadget\Intersect Gadget * - /Folder1/</TitleText>
          <CaptionButtons>
            <CaptionButton aria-label="Minimize"><Icon name="minimize" /></CaptionButton>
            <CaptionButton aria-label="Maximize"><Icon name="maximize" /></CaptionButton>
            <CaptionButton $tone="rose" aria-label="Close"><Icon name="close" /></CaptionButton>
          </CaptionButtons>
        </TitleBar>
        <MenuBar>
          {MENUS.map((menu) => <a key={menu} href={`#${menu}`}>{menu}</a>)}
        </MenuBar>
        <ToolRow>
          <Bar>
            <Tools list="page pageFolder pageGrid pageExcel pageGraph pageMatrix pageFx pageLayout pageNotes pageDigit | open openTemplate openExcel save saveTemplate | import1 import2 import3 | batch recalc |" />
            <Combo w={48} value="100%" label="Zoom" plain />
            <Tools list="| print slide target film | editPage rows | org | find table tableEdit gear | addCol" />
          </Bar>
          <Bar list="sumCol sumRow sort | numCol numRow | bars1 bars2 bars3 | funnel funnelOff funnelRun" />
          <Bar list="x y* z err abc none | g s | first prev next last" />
        </ToolRow>
        <ToolRow>
          <Bar list="cut copy paste" />
          <Bar>
            <Combo w={106} value="Default: Arial" label="Font"><Icon name="text" /></Combo>
            <Combo w={48} value="0" label="Font size" />
            <Tools list="bold italic underline sup sub supsub greek bigger smaller align+ valign+ fontColor>" />
          </Bar>
          <Bar>
            <Tools list="bucket> palette> pen> sun" />
            <Combo w={49} value="" label="Line style"><LineSample /></Combo>
            <Combo w={49} value="0" label="Line width" />
            <Combo w={49} value="" label="Fill pattern"><LineSample $box /></Combo>
            <Combo w={49} value="0" label="Pattern width" />
            <Tools list="hatch> gridLines+ cells" />
          </Bar>
          <Bar list="dataFind dataEdit dataOpen calc1 calc2 calc3" />
          <Bar list="mask unmask | nudge1 nudge2 | lock" />
        </ToolRow>
        <Body>
          <LeftDock>
            <SideTabs>
              <SideTab $h={104}>Project Explorer (1)</SideTab>
              <SideTab $h={67}>Quick Help</SideTab>
              <SideTab $h={83}>Messages Log</SideTab>
            </SideTabs>
            <Bar
              vertical
              list="pointer* zoomIn zoomOut cross region+ select maskTool+ clipTool+ dots text arrow+ lineTool+ rect+ hand graphObj+ ruler+ rotate cube"
            />
          </LeftDock>
          <Center>
            <WorkArea>
              <Workspace>
                <GraphWindow>
                  <TitleBar $h={23}>
                    <Icon name="graphWin" />
                    <TitleText as="h2">Calculate Intersect Points</TitleText>
                    <CaptionButtons>
                      <CaptionButton aria-label="Minimize"><Icon name="minimize" /></CaptionButton>
                      <CaptionButton aria-label="Maximize"><Icon name="maximize" /></CaptionButton>
                      <CaptionButton $tone="rose" aria-label="Close"><Icon name="close" /></CaptionButton>
                    </CaptionButtons>
                  </TitleBar>
                  <GraphPanel>
                    <PushButton $default>New Function</PushButton>
                    <PushButton>Rename</PushButton>
                    <PushButton>Polar</PushButton>
                    <PushButton>Rescale</PushButton>
                  </GraphPanel>
                  <Divider />
                  <Plot>
                    <GraphChart />
                    <RoiButtons>
                      <RoiButton aria-label="Close region">
                        <svg width="11" height="11" viewBox="0 0 11 11" aria-hidden="true"><path d="M1 1l9 9M10 1l-9 9" stroke="#111" strokeWidth="2" /></svg>
                      </RoiButton>
                      <RoiButton aria-label="Region menu">
                        <svg width="7" height="10" viewBox="0 0 7 10" aria-hidden="true"><path d="M0 0l7 5-7 5z" /></svg>
                      </RoiButton>
                    </RoiButtons>
                  </Plot>
                </GraphWindow>
                <MiniWindow>
                  <TitleBar $h={24}>
                    <Icon name="graphWin" />
                    <TitleText as="h2">Graph1</TitleText>
                    <CaptionButtons>
                      <CaptionButton aria-label="Restore"><Icon name="restore" /></CaptionButton>
                      <CaptionButton aria-label="Maximize"><Icon name="maximize" /></CaptionButton>
                      <CaptionButton $tone="rose" aria-label="Close"><Icon name="close" /></CaptionButton>
                    </CaptionButtons>
                  </TitleBar>
                </MiniWindow>
                <Preferences />
                <Cursor width="12" height="18" viewBox="0 0 12 18" aria-hidden="true">
                  <path d="M1.500 1.500v12l3-2.500 2.500 5.500 2-1-2.500-5h4z" fill="#fff" stroke="#222" />
                </Cursor>
                <Tip />
              </Workspace>
              <ScrollTrack>
                <ScrollButton aria-label="Scroll up"><Chevron up /></ScrollButton>
                <ScrollThumb>
                  <svg width="6" height="7" viewBox="0 0 6 7" aria-hidden="true"><path d="M0 .5h6M0 2.500h6M0 4.500h6M0 6.500h6" stroke="#9db5ee" /></svg>
                </ScrollThumb>
                <ScrollButton aria-label="Scroll down"><Chevron /></ScrollButton>
              </ScrollTrack>
            </WorkArea>
            <ToolRow $h={25}>
              <Bar list="plotLine+ plotScatter+ plotLineSym+ plotBar+ plotMulti+ plotBox+ plotArea+ plotRadar+ plotStock+ plotTemplate" />
              <Bar list="plot3d+ | surface+ plot3d+ contour+ image profile" />
              <Bar list="mask1 mask2 | mask1 swap swapRed | swapDark" />
            </ToolRow>
          </Center>
          <RightDock>
            <Bar vertical list="rescale | panelWide panelQuad panelQuad | axisL axisT axisR axisBox axisIn axisIn2 | lines legend scale clock matrix" />
            <Bar vertical list="alignL alignR | alignT alignB | centerV centerH | sameW sameH | front back | group ungroup |" />
          </RightDock>
        </Body>
        <StatusBar>
          <span>For Help, press F1</span>
          <StatusFields>
            <span>-- AU : ON</span>
            <span>Dark Colors &amp; Light Grids</span>
            <span>1:F1</span>
            <span>1:[Function1]1! 1</span>
            <span>Radian</span>
          </StatusFields>
        </StatusBar>
      </AppWindow>
    </Frame>
  );
}
